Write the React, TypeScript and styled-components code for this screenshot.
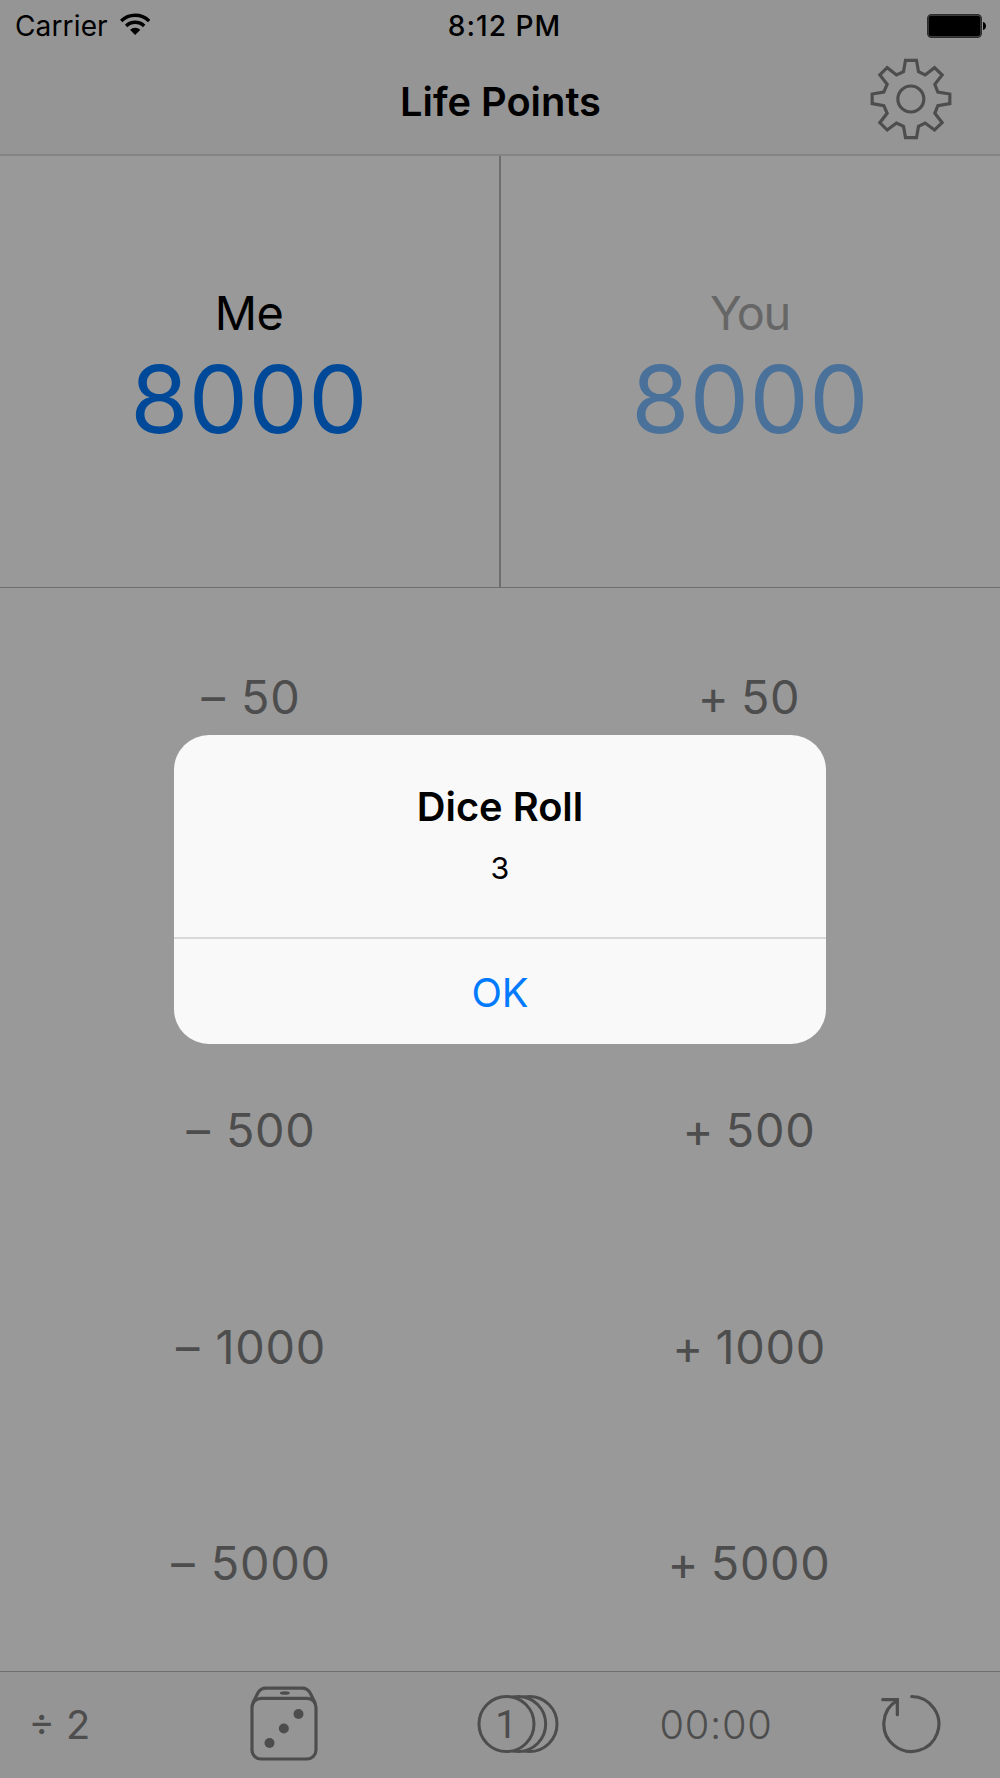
import React from "react";
import styled, { createGlobalStyle } from "styled-components";

const color = {
  canvas: "#999999",
  bar: "#959595",
  hairline: "#848484",
  divider: "#6e6e6e",
  ink: "#4d4d4d",
  blue: "#004999",
};

const GlobalStyle = createGlobalStyle`
  *, *::before, *::after { box-sizing: border-box; }
  body { margin: 0; background: ${color.canvas}; }
`;

const Screen = styled.div`
  position: relative;
  display: flex;
  flex-direction: column;
  width: 1000px;
  height: 1778px;
  overflow: hidden;
  background: ${color.canvas};
  color: #000;
  font-family: Inter, "Liberation Sans", sans-serif;
`;

const Header = styled.header`
  display: flex;
  flex-direction: column;
  height: 156px;
  background: ${color.bar};
  border-bottom: 2px solid ${color.hairline};
`;

const StatusBar = styled.div`
  display: grid;
  grid-template-columns: 1fr auto 1fr;
  align-items: center;
  height: 50px;
  padding: 0 13px 0 15px;
  font-size: 28.1px;
  line-height: 50px;
`;

const Network = styled.div`
  display: flex;
  align-items: center;
  gap: 12px;
  padding-top: 1px;
  letter-spacing: 0.1px;

  svg {
    margin-bottom: 5px;
  }
`;

const Clock = styled.time`
  padding: 1px 0 0 7px;
  font-weight: 500;
  letter-spacing: 1px;
`;

const BatterySlot = styled.div`
  display: flex;
  justify-content: flex-end;
`;

const NavBar = styled.div`
  display: grid;
  grid-template-columns: 1fr auto 1fr;
  align-items: center;
  height: 104px;
  padding: 0 47px;
`;

const Title = styled.h1`
  grid-column: 2;
  margin: 0;
  padding: 0 0 1px 1px;
  font-size: 39.8px;
  font-weight: 600;
  line-height: 103px;
`;

const IconButton = styled.button`
  display: flex;
  justify-self: end;
  align-items: center;
  justify-content: center;
  padding: 0;
  border: 0;
  background: none;
  color: ${color.ink};
`;

const SettingsButton = styled(IconButton)`
  margin-bottom: 7px;
`;

const Players = styled.section`
  display: grid;
  grid-template-columns: 501px 499px;
  height: 432px;
  border-bottom: 1px solid ${color.divider};
`;

const Player = styled.div<{ $active?: boolean }>`
  display: flex;
  flex-direction: column;
  align-items: center;
  padding: 128px 1px 0 0;
  border-right: ${(p) => (p.$active ? `2px solid ${color.divider}` : "0")};
`;

const PlayerName = styled.span<{ $active?: boolean }>`
  font-size: 46.8px;
  line-height: 58px;
  letter-spacing: ${(p) => (p.$active ? "-0.5px" : "-1.3px")};
  color: ${(p) => (p.$active ? "#000" : "#666")};
`;

const Points = styled.span<{ $active?: boolean }>`
  font-size: 94px;
  line-height: 115px;
  letter-spacing: 0.4px;
  color: ${(p) => (p.$active ? color.blue : "#4a719a")};
`;

const Adjustments = styled.section`
  display: grid;
  grid-template-columns: 1fr 1fr;
  grid-template-rows: repeat(5, 1fr);
  height: 1083px;
`;

const AdjustButton = styled.button<{ $add?: boolean }>`
  padding: ${(p) => (p.$add ? "1px 2px 0 0" : "1px 0 0 2px")};
  border: 0;
  background: none;
  color: ${color.ink};
  font: 400 46.8px/58px Inter, "Liberation Sans", sans-serif;
  letter-spacing: 0.7px;
  word-spacing: ${(p) => (p.$add ? "-2.2px" : "1.5px")};
`;

const Toolbar = styled.footer`
  display: grid;
  grid-template-columns: 120px 327px 141px 257px 131px;
  height: 107px;
  background: ${color.bar};
  border-top: 1px solid ${color.divider};
`;

const Tool = styled.button<{ $light?: boolean }>`
  display: flex;
  align-items: center;
  justify-content: center;
  padding: 0 1px 1px 0;
  border: 0;
  background: none;
  color: ${color.ink};
  font-family: Inter, "Liberation Sans", sans-serif;
  font-size: 39.8px;
  font-weight: ${(p) => (p.$light ? 300 : 400)};
  letter-spacing: ${(p) => (p.$light ? "0.7px" : "0")};
`;

const IconTool = styled(Tool)<{ $lift?: number }>`
  padding: 0 0 ${(p) => p.$lift ?? 2}px 0;
`;

const Overlay = styled.div`
  position: absolute;
  inset: 0;
  display: flex;
  align-items: center;
  justify-content: center;
`;

const Alert = styled.div`
  display: flex;
  flex-direction: column;
  width: 652px;
  height: 309px;
  overflow: hidden;
  border-radius: 35px;
  background: #f9f9f9;
`;

const AlertBody = styled.div`
  display: flex;
  flex-direction: column;
  align-items: center;
  height: 204px;
  padding-top: 47px;
  border-bottom: 2px solid #d9d9dc;
`;

const AlertTitle = styled.h2`
  margin: 0;
  font-size: 39.8px;
  font-weight: 600;
  line-height: 50px;
`;

const AlertMessage = styled.p`
  margin: 17px 0 0;
  font-size: 30.4px;
  line-height: 38px;
`;

const AlertAction = styled.button`
  flex: 1;
  padding: 3px 0 0;
  border: 0;
  background: none;
  color: #007aff;
  font: 400 39.8px/50px Inter, "Liberation Sans", sans-serif;
`;

const WifiIcon = () => (
  <svg width="30" height="22" viewBox="362 38 90 66" fill="none" stroke="#000">
    <path d="M365.5 62A60 60 0 0 1 449.5 62" strokeWidth="10" />
    <path d="M380.5 77A38.5 38.5 0 0 1 434.5 77" strokeWidth="10.5" />
    <path d="M407.5 104L392 88.500A22 22 0 0 1 423 88.500Z" fill="#000" stroke="none" />
  </svg>
);

const BatteryIcon = () => (
  <svg width="60" height="24" viewBox="0 0 60 24">
    <rect x="0.6" y="0.6" width="53.800" height="22.800" rx="4" fill="#5a5a5a" stroke="#2c2c2c" strokeWidth="1.200" />
    <rect x="1.700" y="1.700" width="51.600" height="20.600" rx="2.800" fill="#000" />
    <path d="M56 8c4 .8 4 7.200 0 8z" fill="#000" />
  </svg>
);

const GearIcon = () => (
  <svg width="84" height="84" viewBox="88.500 169 252 252" fill="none" stroke="currentColor" strokeWidth="9.500">
    <path d="M198 179H231L237 213L257 223L285 201L308 223L286 251L295 274L331 280V309L295 315L286 338L308 366L285 388L257 367L237 377L231 411H198L192 377L171 367L143 388L121 366L143 338L133 315L98 309V280L133 274L143 251L121 223L143 201L171 223L192 213Z" />
    <circle cx="214" cy="295" r="39" />
  </svg>
);

const DiceIcon = () => (
  <svg width="68" height="75" viewBox="748.500 109 204 225" fill="none" stroke="currentColor" strokeWidth="9.500">
    <rect x="754.500" y="146" width="192" height="182" rx="27" />
    <path d="M757 160L772 130Q780 115.500 796 115.500H905Q921 115.500 929 130L944 160" />
    <g fill="currentColor" stroke="none">
      <ellipse cx="853" cy="130" rx="15" ry="5.500" />
      <circle cx="894" cy="193" r="15" />
      <circle cx="850" cy="236.500" r="15" />
      <circle cx="807" cy="280" r="15" />
    </g>
  </svg>
);

const CoinsIcon = () => (
  <svg width="82" height="60" viewBox="109.500 131.500 246 180" stroke="currentColor" strokeWidth="9" fill={color.bar}>
    <circle cx="267" cy="221.500" r="82.500" />
    <circle cx="233" cy="221.500" r="82.500" />
    <circle cx="198" cy="221.500" r="82.500" />
    <text x="164" y="263" fill="currentColor" stroke="none" fontFamily="Roboto, sans-serif" fontSize="117">1</text>
  </svg>
);

const ResetIcon = () => (
  <svg width="60" height="60" viewBox="122 132 180 180" fill="none" stroke="currentColor" strokeWidth="9.500" strokeLinecap="round">
    <path d="M214 139.500A82.500 82.500 0 1 1 171 151" />
    <path d="M127 149H171V194" />
  </svg>
);

const steps = [50, 100, 500, 1000, 5000];

export default function App() {
  return (
    <Screen>
      <GlobalStyle />
      <Header>
        <StatusBar>
          <Network>
            <span>Carrier</span>
            <WifiIcon />
          </Network>
          <Clock>8:12 PM</Clock>
          <BatterySlot>
            <BatteryIcon />
          </BatterySlot>
        </StatusBar>
        <NavBar>
          <Title>Life Points</Title>
          <SettingsButton aria-label="Settings">
            <GearIcon />
          </SettingsButton>
        </NavBar>
      </Header>

      <Players>
        <Player $active>
          <PlayerName $active>Me</PlayerName>
          <Points $active>8000</Points>
        </Player>
        <Player>
          <PlayerName>You</PlayerName>
          <Points>8000</Points>
        </Player>
      </Players>

      <Adjustments>
        {steps.map((step) => (
          <React.Fragment key={step}>
            {step === 100 ? <span /> : <AdjustButton>– {step}</AdjustButton>}
            {step === 100 ? <span /> : <AdjustButton $add>+ {step}</AdjustButton>}
          </React.Fragment>
        ))}
      </Adjustments>

      <Toolbar>
        <Tool>÷ 2</Tool>
        <IconTool $lift={3} aria-label="Roll dice">
          <DiceIcon />
        </IconTool>
        <IconTool aria-label="Flip coin">
          <CoinsIcon />
        </IconTool>
        <Tool $light>00:00</Tool>
        <IconTool aria-label="Reset">
          <ResetIcon />
        </IconTool>
      </Toolbar>

      <Overlay>
        <Alert role="dialog">
          <AlertBody>
            <AlertTitle>Dice Roll</AlertTitle>
            <AlertMessage>3</AlertMessage>
          </AlertBody>
          <AlertAction>OK</AlertAction>
        </Alert>
      </Overlay>
    </Screen>
  );
}
